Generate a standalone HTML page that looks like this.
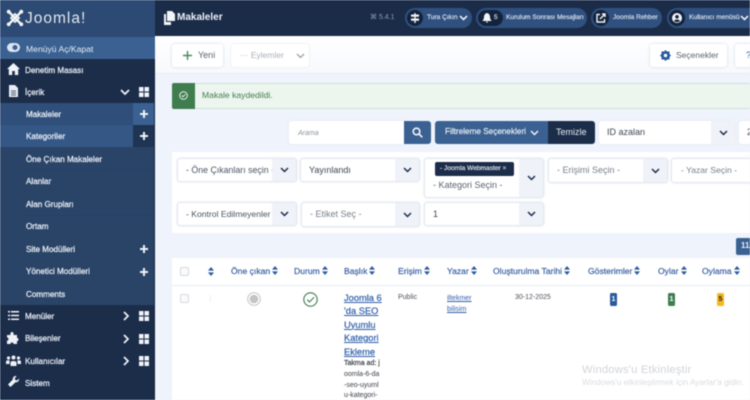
<!DOCTYPE html>
<html lang="tr"><head><meta charset="utf-8"><title>Makaleler</title>
<style>
*{box-sizing:border-box}
html,body{margin:0;padding:0;width:750px;height:400px;overflow:hidden;background:#eff3fb;font-family:"Liberation Sans",sans-serif}
#r{position:relative;width:750px;height:400px;overflow:hidden;filter:blur(.4px)}
.a,.t{position:absolute}
.t{white-space:nowrap;line-height:1}
.m{position:absolute;left:0;width:155px;height:22.4px}
.m span{position:absolute;top:6.500px;font-size:8.100px;line-height:10px;color:#e8eef6;white-space:nowrap;-webkit-text-stroke:.25px #e8eef6}
.s span{left:26px}
.ic{position:absolute;left:7px;top:4px}
.plus{position:absolute;left:140px;top:7px}
.gr{position:absolute;left:139px;top:6px;width:10px;height:10px}
.ch{position:absolute;left:120px;top:6px}
.sel{position:absolute;background:#fff;border:1px solid #e3e8f0;border-radius:3px;box-shadow:0 0 2px #dfe5ee;font-size:9px;color:#4a5563;overflow:hidden}
.sel b{font-weight:normal;position:absolute;left:8px;top:6px;white-space:nowrap;line-height:11px}
.sel i{position:absolute;right:0;top:0;bottom:0;width:24px;background:#eff3f9}
.sel svg{position:absolute;right:7px;top:50%;margin-top:-3px}
.h{position:absolute;top:266px;font-size:8.600px;line-height:11px;color:#3c63a4;white-space:nowrap;-webkit-text-stroke:.2px #3c63a4}
.so{display:inline-block;width:6px;height:9px;vertical-align:-1px;margin-left:2px}
.pill{position:absolute;top:8px;height:20px;border-radius:10px;background:#30507f}
.pc{position:absolute;left:2px;top:2px;width:16px;height:16px;border-radius:8px;background:#14233c}
.pt{position:absolute;top:6px;font-size:6.600px;line-height:8px;color:#dbe5f2;white-space:nowrap;-webkit-text-stroke:.15px #dbe5f2}
.btn{position:absolute;background:#fff;border-radius:3px;box-shadow:0 0 3px #d4d9e0;font-size:9px;color:#5b6470}
</style></head><body><div id="r">

<!-- top bar -->
<div class="a" style="left:0;top:0;width:750px;height:36px;background:#1b2c49"></div>
<div class="a" style="left:0;top:0;width:155px;height:37px;background:#2c4a73"></div>

<!-- logo -->
<svg class="a" style="left:6px;top:9px" width="18" height="18" viewBox="0 0 18 18" fill="none" stroke="#f2f4f7" stroke-width="2.400"><path d="M3 3 15 15M15 3 3 15"/><path d="M5 9 9 5 13 9 9 13Z" stroke-width="1.800"/><circle cx="2.700" cy="2.700" r="1.900" fill="#f2f4f7" stroke="none"/><circle cx="15.300" cy="2.700" r="1.900" fill="#f2f4f7" stroke="none"/><circle cx="2.700" cy="15.300" r="1.900" fill="#f2f4f7" stroke="none"/><circle cx="15.300" cy="15.300" r="1.900" fill="#f2f4f7" stroke="none"/></svg>
<div class="t" style="left:25px;top:11px;font-size:15.500px;color:#e3e8ef;letter-spacing:1px">Joomla!</div>

<!-- title -->
<svg class="a" style="left:163px;top:11px" width="12" height="14" viewBox="0 0 12 14" fill="#f2f5f9"><path d="M4 0h5l3 3v7H4Z"/><path d="M1 3h2v8h5v3H1Z"/></svg>
<div class="t" style="left:177px;top:13px;font-size:10px;font-weight:bold;color:#eef2f7">Makaleler</div>

<!-- header right -->
<div class="t" style="left:370px;top:14px;font-size:7px;color:#8fa0b8">⌘ 5.4.1</div>
<div class="pill" style="left:405px;width:67px"><div class="pc"></div>
<svg class="a" style="left:5px;top:5px" width="10" height="10" viewBox="0 0 10 10" fill="#eef2f7"><path d="M4.300 0h1.400v10H4.300ZM1 1.500h8v2.200H1ZM1 5.500h8v2.200H1Z"/></svg>
<div class="pt" style="left:22px">Tura Çıkın</div>
<svg class="a" style="left:54px;top:7px" width="9" height="6" viewBox="0 0 9 6" fill="none" stroke="#e8eef6" stroke-width="1.600"><path d="M1 1 4.500 4.500 8 1"/></svg></div>
<div class="pill" style="left:476px;width:111px"><div class="pc" style="width:25px"></div>
<svg class="a" style="left:6px;top:5px" width="10" height="10" viewBox="0 0 10 10" fill="#f2f5f9"><path d="M5 0C3 .5 2 2 2 4c0 2-1 3-1.500 4h9C9 7 8 6 8 4 8 2 7 .5 5 0ZM3.800 8.500h2.400L5 10Z"/></svg>
<div class="pt" style="left:18px">5</div>
<div class="pt" style="left:30px">Kurulum Sonrası Mesajları</div></div>
<div class="pill" style="left:591px;width:71px"><div class="pc"></div>
<svg class="a" style="left:5px;top:5px" width="10" height="10" viewBox="0 0 10 10" fill="none" stroke="#f2f5f9" stroke-width="1.400"><path d="M4 1.500H1v7.500h7.500V6M4 6 9 1M6 1h3v3"/></svg>
<div class="pt" style="left:22px">Joomla Rehber</div></div>
<div class="pill" style="left:667px;width:83px;border-radius:10px 0 0 10px"><div class="pc"></div>
<svg class="a" style="left:5px;top:5px" width="10" height="10" viewBox="0 0 10 10"><circle cx="5" cy="5" r="5" fill="#f2f5f9"/><circle cx="5" cy="3.800" r="1.800" fill="#14233c"/><path d="M2 8c.5-2 5.500-2 6 0-1.500 1.500-4.500 1.500-6 0Z" fill="#14233c"/></svg>
<div class="pt" style="left:22px">Kullanıcı menüsü</div>
<svg class="a" style="left:73px;top:7px" width="9" height="6" viewBox="0 0 9 6" fill="none" stroke="#e8eef6" stroke-width="1.600"><path d="M1 1 4.500 4.500 8 1"/></svg></div>

<!-- sidebar -->
<div class="a" style="left:0;top:37px;width:155px;height:363px;background:#1c2d4a"></div>
<div class="a" style="left:154px;top:37px;width:1px;height:363px;background:#16243c"></div>
<div class="a" style="left:0;top:37px;width:155px;height:22px;background:#3a6191"></div>
<div class="a" style="left:0;top:103px;width:154px;height:202px;background:#2a4467"></div>
<div class="a" style="left:0;top:103px;width:133px;height:22px;background:#2f4e79"></div>
<div class="a" style="left:0;top:125px;width:133px;height:22px;background:#345786"></div>
<div class="a" style="left:133px;top:103px;width:21px;height:22px;background:#3a6191"></div>
<div class="a" style="left:133px;top:125px;width:21px;height:22px;background:#1f3352"></div>
<div class="a" style="left:25px;top:169px;width:129px;height:1px;background:#24406a"></div>
<div class="a" style="left:25px;top:215px;width:129px;height:1px;background:#24406a"></div>

<div class="m" style="top:37px"><svg class="ic" style="top:6px" width="13" height="9" viewBox="0 0 13 9"><rect width="13" height="9" rx="4.500" fill="#dce5f0"/><rect x="5.500" y="2" width="5" height="5" rx="2.500" fill="#3a6191"/></svg><span style="left:26px;font-size:8.600px;-webkit-text-stroke:0;color:#e6edf6">Menüyü Aç/Kapat</span></div>

<div class="m" style="top:59px"><svg class="ic" width="13" height="12" viewBox="0 0 13 12" fill="#f0f3f8"><path d="M6.500 0 0 6h1.800v6h3.400V8h2.600v4h3.400V6H13Z"/></svg><span style="left:25px">Denetim Masası</span></div>
<div class="m" style="top:81px"><svg class="ic" style="left:9px" width="9" height="12" viewBox="0 0 9 12" fill="#e8edf4"><path d="M0 0h6l3 3v9H0Z"/><path d="M2 6h5M2 8h5M2 10h5" stroke="#1c2d4a" stroke-width=".7"/></svg><span style="left:25px">İçerik</span>
<svg class="ch" style="left:120px;top:8px" width="10" height="7" viewBox="0 0 10 7" fill="none" stroke="#f0f3f8" stroke-width="1.700"><path d="M1 1 5 5 9 1"/></svg>
<svg class="gr" viewBox="0 0 10 10" fill="#f0f3f8"><path d="M0 0h4.500v4.500H0ZM5.500 0H10v4.500H5.500ZM0 5.500h4.500V10H0ZM5.500 5.500H10V10H5.500Z"/></svg></div>

<div class="m s" style="top:103px"><span>Makaleler</span><svg class="plus" width="8" height="8" viewBox="0 0 8 8" fill="#eef2f7"><path d="M3 0h2v3h3v2H5v3H3V5H0V3h3Z"/></svg></div>
<div class="m s" style="top:125px"><span>Kategoriler</span><svg class="plus" width="8" height="8" viewBox="0 0 8 8" fill="#eef2f7"><path d="M3 0h2v3h3v2H5v3H3V5H0V3h3Z"/></svg></div>
<div class="m s" style="top:148px"><span>Öne Çıkan Makaleler</span></div>
<div class="m s" style="top:170.500px"><span>Alanlar</span></div>
<div class="m s" style="top:193px"><span>Alan Grupları</span></div>
<div class="m s" style="top:215.500px"><span>Ortam</span></div>
<div class="m s" style="top:238px"><span>Site Modülleri</span><svg class="plus" width="8" height="8" viewBox="0 0 8 8" fill="#eef2f7"><path d="M3 0h2v3h3v2H5v3H3V5H0V3h3Z"/></svg></div>
<div class="m s" style="top:260.500px"><span>Yönetici Modülleri</span><svg class="plus" width="8" height="8" viewBox="0 0 8 8" fill="#eef2f7"><path d="M3 0h2v3h3v2H5v3H3V5H0V3h3Z"/></svg></div>
<div class="m s" style="top:283px"><span>Comments</span></div>

<div class="m" style="top:305px"><svg class="ic" style="left:8px;top:6px" width="11" height="9" viewBox="0 0 11 9" fill="#eef2f7"><path d="M0 0h2v1.500H0ZM3 0h8v1.500H3ZM0 3.700h2v1.500H0ZM3 3.700h8v1.500H3ZM0 7.500h2V9H0ZM3 7.500h8V9H3Z"/></svg><span style="left:25px">Menüler</span>
<svg class="ch" style="left:123px" width="7" height="10" viewBox="0 0 7 10" fill="none" stroke="#f0f3f8" stroke-width="1.700"><path d="M1 1 5 5 1 9"/></svg>
<svg class="gr" viewBox="0 0 10 10" fill="#f0f3f8"><path d="M0 0h4.500v4.500H0ZM5.500 0H10v4.500H5.500ZM0 5.500h4.500V10H0ZM5.500 5.500H10V10H5.500Z"/></svg></div>
<div class="m" style="top:327.500px"><svg class="ic" style="left:7px" width="12" height="12" viewBox="0 0 12 12" fill="#eef2f7"><path d="M0 3h3.500C3 1 4 0 5 0s2 1 1.500 3H10v3c2-.5 2 3.500 0 3v3H6.500c.5-2-3.500-2-3 0H0V8.500c2 .5 2-3.500 0-3Z"/></svg><span style="left:25px">Bileşenler</span>
<svg class="ch" style="left:123px" width="7" height="10" viewBox="0 0 7 10" fill="none" stroke="#f0f3f8" stroke-width="1.700"><path d="M1 1 5 5 1 9"/></svg>
<svg class="gr" viewBox="0 0 10 10" fill="#f0f3f8"><path d="M0 0h4.500v4.500H0ZM5.500 0H10v4.500H5.500ZM0 5.500h4.500V10H0ZM5.500 5.500H10V10H5.500Z"/></svg></div>
<div class="m" style="top:350px"><svg class="ic" style="left:6px;top:5px" width="15" height="11" viewBox="0 0 15 11" fill="#eef2f7"><circle cx="7.500" cy="2.500" r="2"/><circle cx="2.500" cy="3" r="1.600"/><circle cx="12.500" cy="3" r="1.600"/><path d="M4.500 11V7.500c0-2 6-2 6 0V11ZM0 9V6.500c0-1.500 3-1.500 3.600-1L3.500 9ZM15 9V6.500c0-1.500-3-1.500-3.600-1l.1 3.500Z"/></svg><span style="left:25px">Kullanıcılar</span>
<svg class="ch" style="left:123px" width="7" height="10" viewBox="0 0 7 10" fill="none" stroke="#f0f3f8" stroke-width="1.700"><path d="M1 1 5 5 1 9"/></svg>
<svg class="gr" viewBox="0 0 10 10" fill="#f0f3f8"><path d="M0 0h4.500v4.500H0ZM5.500 0H10v4.500H5.500ZM0 5.500h4.500V10H0ZM5.500 5.500H10V10H5.500Z"/></svg></div>
<div class="m" style="top:372px"><svg class="ic" style="left:8px" width="11" height="11" viewBox="0 0 11 11" fill="#eef2f7"><path d="M11 2.500 9 4.500 7.300 4 6.800 2.200 8.700 0C6.500-.5 4.500 1 4.800 3.500L0 8.500 2.500 11l5-4.800C9.800 6.500 11.500 4.700 11 2.500Z"/></svg><span style="left:25px">Sistem</span></div>

<!-- toolbar -->
<div class="a" style="left:155px;top:36px;width:595px;height:38px;background:linear-gradient(#fff,#f7f9fc);border-bottom:1px solid #e9eef5"></div>
<div class="btn" style="left:172px;top:44px;width:51px;height:23px"><svg class="a" style="left:11px;top:7px" width="9" height="9" viewBox="0 0 9 9" fill="#4a8a5c"><path d="M3.800 0h1.400v3.800H9v1.400H5.200V9H3.800V5.200H0V3.800h3.800Z"/></svg><div class="t" style="left:26px;top:7px">Yeni</div></div>
<div class="btn" style="left:231px;top:44px;width:78px;height:23px;color:#aab0b8;box-shadow:0 0 2px #dde1e6"><div class="t" style="left:9px;top:7px;font-size:8.500px">··· Eylemler</div>
<svg class="a" style="left:65px;top:9px" width="9" height="6" viewBox="0 0 9 6" fill="none" stroke="#9aa2ad" stroke-width="1.300"><path d="M1 1 4.500 4.500 8 1"/></svg></div>
<div class="btn" style="left:650px;top:44px;width:77px;height:23px"><svg class="a" style="left:10px;top:6px" width="11" height="11" viewBox="0 0 11 11"><path d="M5.500 0 7 1.500h2.500V4L11 5.500 9.500 7v2.500H7L5.500 11 4 9.500H1.500V7L0 5.500 1.500 4V1.500H4Z" fill="#2a5a9e"/><circle cx="5.500" cy="5.500" r="1.700" fill="#fff"/></svg><div class="t" style="left:26px;top:7px;font-size:8.500px">Seçenekler</div></div>
<div class="btn" style="left:735px;top:44px;width:20px;height:23px"><div class="t" style="left:11px;top:7px;color:#2a5a9e">?</div></div>

<!-- alert -->
<div class="a" style="left:172px;top:83px;width:578px;height:26px;background:#edf5ef;border:1px solid #cfe3d4;border-right:0;border-radius:2px"></div>
<div class="a" style="left:172px;top:83px;width:23px;height:26px;background:#3f7d4f;border-radius:2px 0 0 2px"></div>
<svg class="a" style="left:179px;top:91px" width="9" height="9" viewBox="0 0 9 9" fill="none" stroke="#e8f2ea" stroke-width="1"><circle cx="4.500" cy="4.500" r="3.800"/><path d="M2.700 4.500 4 5.800 6.300 3.300"/></svg>
<div class="t" style="left:202px;top:91px;font-size:8.600px;color:#3f7d4f">Makale kaydedildi.</div>

<!-- search row -->
<div class="sel" style="left:289px;top:121px;width:116px;height:23px;border:0;border-radius:3px 0 0 3px"><b style="left:9px;top:7px;font-size:7px;font-style:italic;color:#8a929c">Arama</b></div>
<div class="a" style="left:404px;top:121px;width:27px;height:23px;background:#3a6191;border-radius:0 3px 3px 0"></div>
<svg class="a" style="left:412px;top:127px" width="11" height="11" viewBox="0 0 11 11" fill="none" stroke="#f2f5f9" stroke-width="1.600"><circle cx="4.500" cy="4.500" r="3.300"/><path d="M7 7 10.300 10.300"/></svg>
<div class="a" style="left:435px;top:121px;width:113px;height:23px;background:#3a6191;border-radius:3px 0 0 3px"></div>
<div class="t" style="left:445px;top:128px;font-size:8.200px;color:#eef2f7;-webkit-text-stroke:.15px #eef2f7">Filtreleme Seçenekleri</div>
<svg class="a" style="left:530px;top:130px" width="9" height="6" viewBox="0 0 9 6" fill="none" stroke="#eef2f7" stroke-width="1.500"><path d="M1 1 4.500 4.500 8 1"/></svg>
<div class="a" style="left:548px;top:121px;width:47px;height:23px;background:#1c2d4a;border-radius:0 3px 3px 0"></div>
<div class="t" style="left:556px;top:128px;font-size:9px;color:#e6ebf2">Temizle</div>
<div class="sel" style="left:599px;top:121px;width:136px;height:23px;border:0;color:#3d4654"><b style="top:6px;font-size:9px">ID azalan</b><i style="width:24px"></i><svg width="9" height="6" viewBox="0 0 9 6" fill="none" stroke="#1c2d4a" stroke-width="1.500"><path d="M1 1 4.500 4.500 8 1"/></svg></div>
<div class="sel" style="left:739px;top:121px;width:20px;height:23px;border:0;color:#3d4654"><b style="top:6px">20</b></div>

<!-- filter panel -->
<div class="a" style="left:172px;top:152px;width:578px;height:81px;background:#fff"></div>
<div class="sel" style="left:177px;top:158px;width:120px;height:24px"><b style="left:8px;top:6px;font-size:8.800px;color:#4a5563">- Öne Çıkanları seçin -</b><i></i><svg width="9" height="6" viewBox="0 0 9 6" fill="none" stroke="#1c2d4a" stroke-width="1.500"><path d="M1 1 4.500 4.500 8 1"/></svg></div>
<div class="sel" style="left:300px;top:158px;width:120px;height:24px"><b style="color:#3d4654">Yayınlandı</b><i></i><svg width="9" height="6" viewBox="0 0 9 6" fill="none" stroke="#1c2d4a" stroke-width="1.500"><path d="M1 1 4.500 4.500 8 1"/></svg></div>
<div class="sel" style="left:424px;top:158px;width:120px;height:40px"><div class="a" style="left:10px;top:3px;width:79px;height:14px;background:#1c2d4a;border-radius:2px;color:#e6ebf2;font-size:6.600px;line-height:14px;padding-left:5px;white-space:nowrap;-webkit-text-stroke:.15px #e6ebf2">- Joomla Webmaster <span style="color:#aab4c4">×</span></div><b style="left:8px;top:21px;color:#5b6470">- Kategori Seçin -</b><i></i><svg width="9" height="6" viewBox="0 0 9 6" fill="none" stroke="#1c2d4a" stroke-width="1.500"><path d="M1 1 4.500 4.500 8 1"/></svg></div>
<div class="sel" style="left:548px;top:158px;width:120px;height:25px"><b style="color:#78808c">- Erişimi Seçin -</b><i></i><svg width="9" height="6" viewBox="0 0 9 6" fill="none" stroke="#1c2d4a" stroke-width="1.500"><path d="M1 1 4.500 4.500 8 1"/></svg></div>
<div class="sel" style="left:671px;top:158px;width:95px;height:25px"><b style="left:9px;font-size:8.600px;color:#78808c">- Yazar Seçin -</b></div>
<div class="sel" style="left:177px;top:202px;width:120px;height:24px"><b style="left:8px;top:6px;font-size:8.600px">- Kontrol Edilmeyenler -</b><i></i><svg width="9" height="6" viewBox="0 0 9 6" fill="none" stroke="#1c2d4a" stroke-width="1.500"><path d="M1 1 4.500 4.500 8 1"/></svg></div>
<div class="sel" style="left:301px;top:202px;width:119px;height:25px"><b style="color:#78808c">- Etiket Seç -</b><i></i><svg width="9" height="6" viewBox="0 0 9 6" fill="none" stroke="#1c2d4a" stroke-width="1.500"><path d="M1 1 4.500 4.500 8 1"/></svg></div>
<div class="sel" style="left:424px;top:202px;width:120px;height:24px"><b style="color:#3d4654">1</b><i></i><svg width="9" height="6" viewBox="0 0 9 6" fill="none" stroke="#1c2d4a" stroke-width="1.500"><path d="M1 1 4.500 4.500 8 1"/></svg></div>

<!-- page button -->
<div class="a" style="left:736px;top:238px;width:20px;height:17px;background:#3a6191;border-radius:2px"></div>
<div class="t" style="left:741px;top:242px;font-size:8px;font-weight:bold;color:#eef2f7">11/</div>

<!-- table -->
<div class="a" style="left:172px;top:258px;width:578px;height:142px;background:#fff"></div>
<div class="a" style="left:172px;top:285px;width:578px;height:1px;background:#e8ecf2"></div>
<div class="a" style="left:180px;top:267px;width:9px;height:9px;border:1px solid #d5d9df;border-radius:2px;background:#fafafa"></div>
<div class="a" style="left:180px;top:294px;width:9px;height:9px;border:1px solid #d5d9df;border-radius:2px;background:#fafafa"></div>

<svg width="0" height="0" style="position:absolute"><defs><symbol id="so" viewBox="0 0 6 9"><path d="M3 0 6 3.600H0ZM3 9 0 5.400H6Z" fill="#2a5a9e"/></symbol></defs></svg>
<svg class="a" style="left:208px;top:267px" width="6" height="9"><use href="#so"/></svg>
<div class="h" style="left:231px">Öne çıkan<svg class="so" style="margin-left:2px"><use href="#so"/></svg></div>
<div class="h" style="left:294px">Durum<svg class="so"><use href="#so"/></svg></div>
<div class="h" style="left:344px">Başlık<svg class="so"><use href="#so"/></svg></div>
<div class="h" style="left:398px">Erişim<svg class="so"><use href="#so"/></svg></div>
<div class="h" style="left:447px">Yazar<svg class="so"><use href="#so"/></svg></div>
<div class="h" style="left:493px">Oluşturulma Tarihi<svg class="so"><use href="#so"/></svg></div>
<div class="h" style="left:588px">Gösterimler<svg class="so"><use href="#so"/></svg></div>
<div class="h" style="left:658px">Oylar<svg class="so"><use href="#so"/></svg></div>
<div class="h" style="left:702px">Oylama<svg class="so"><use href="#so"/></svg></div>

<div class="a" style="left:210px;top:295px;width:1px;height:7px;background:#eceef1"></div>
<svg class="a" style="left:247px;top:292px" width="14" height="14" viewBox="0 0 14 14"><circle cx="7" cy="7" r="6.300" fill="#fff" stroke="#ccc" stroke-width="1.200"/><circle cx="7" cy="7" r="4.300" fill="#c4c4c4"/></svg>
<svg class="a" style="left:303px;top:292px" width="15" height="15" viewBox="0 0 15 15" fill="none" stroke="#3f7d4f" stroke-width="1.100"><circle cx="7.500" cy="7.500" r="6.700"/><path d="M4.200 7.700 6.500 10 11 5.200"/></svg>

<div class="a" style="left:344px;top:291.500px;font-size:9.300px;line-height:13.500px;color:#2f5ea8;-webkit-text-stroke:.2px #2f5ea8;text-decoration:underline;white-space:nowrap">Joomla 6<br>'da SEO<br>Uyumlu<br>Kategori<br>Ekleme</div>
<div class="a" style="left:344px;top:359px;font-size:7px;line-height:10.800px;color:#3a3f47;white-space:nowrap"><span style="-webkit-text-stroke:.2px #3a3f47">Takma ad: j</span><br>oomla-6-da<br>-seo-uyuml<br>u-kategori-</div>
<div class="t" style="left:398px;top:294px;font-size:7px;color:#4a4f57">Public</div>
<div class="a" style="left:447px;top:293px;font-size:7px;line-height:11px;color:#2f5ea8;text-decoration:underline;white-space:nowrap">iltekmer<br>bilisim</div>
<div class="t" style="left:515px;top:294px;font-size:7px;color:#4a4f57">30-12-2025</div>
<div class="a" style="left:610px;top:293px;width:7px;height:13px;background:#2a5a9e;border-radius:1.500px;color:#fff;font-size:7px;font-weight:bold;line-height:13px;text-align:center">1</div>
<div class="a" style="left:668px;top:293px;width:7px;height:13px;background:#3f7d4f;border-radius:1.500px;color:#fff;font-size:7px;font-weight:bold;line-height:13px;text-align:center">1</div>
<div class="a" style="left:717px;top:293px;width:7px;height:13px;background:#f5b81d;border-radius:1.500px;color:#222;font-size:7px;font-weight:bold;line-height:13px;text-align:center">5</div>

<!-- watermark -->
<div class="t" style="left:582px;top:365px;font-size:11.200px;color:#d2d4d8;letter-spacing:.2px">Windows'u Etkinleştir</div>
<div class="t" style="left:582px;top:379px;font-size:8.200px;color:#dadce0">Windows'u etkinleştirmek için Ayarlar'a gidin.</div>
</div></body></html>
